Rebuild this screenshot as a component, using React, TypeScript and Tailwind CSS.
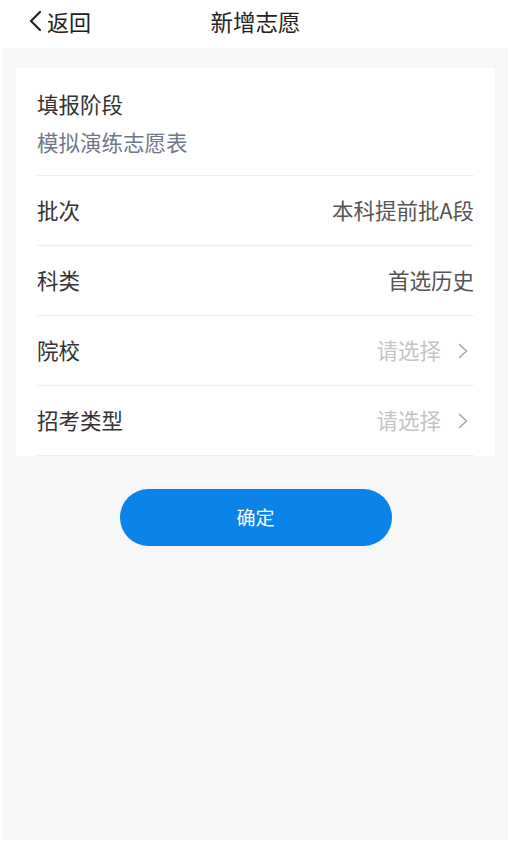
import React from "react";

const font = { fontFamily: '"Noto Sans CJK SC", "Noto Sans", sans-serif' };

function Chevron({ className = "" }: { className?: string }) {
  return (
    <svg width="12" height="20" viewBox="0 0 12 20" className={className} fill="none">
      <path d="M2.5 3.5l7 6.5-7 6.5" stroke="currentColor" strokeWidth="1.6" strokeLinecap="round" strokeLinejoin="round" />
    </svg>
  );
}

function Row({ label, value, placeholder }: { label: string; value?: string; placeholder?: boolean }) {
  return (
    <div className="h-[70px] flex items-center justify-between border-t border-[#eeeeee]">
      <span className="text-[21.5px] text-[#333333]">{label}</span>
      {placeholder ? (
        <span className="flex items-center gap-[16px] text-[21.5px] text-[#c4c4c4]">
          请选择
          <Chevron className="text-[#a8a8a8] mr-[5px]" />
        </span>
      ) : (
        <span className="text-[21.5px] text-[#555555]">{value}</span>
      )}
    </div>
  );
}

export default function App() {
  return (
    <div style={font} className="w-[511px] h-[841px] bg-white flex flex-col">
      <div className="h-[48px] flex items-center relative shrink-0 pb-[6px]">
        <div className="flex items-center pl-[27px] text-[22px] leading-[30px] text-[#222222]">
          <svg width="18" height="26" viewBox="0 0 18 26" fill="none" className="mr-[2px]">
            <path d="M13 4L4 13l9 9" stroke="#222222" strokeWidth="2.2" strokeLinecap="round" strokeLinejoin="round" />
          </svg>
          返回
        </div>
        <div className="absolute left-0 right-0 top-0 h-[42px] flex items-center justify-center text-[22.5px] leading-[30px] text-[#222222] pointer-events-none">
          新增志愿
        </div>
      </div>
      <div className="flex-1 bg-[#f6f7f9] mx-[3px] mb-[1px] pt-[20px]">
        <div className="mx-[13px] bg-white px-[21px]">
          <div className="h-[107px] flex flex-col justify-center gap-[8px] pt-[2px]">
            <span className="text-[21.5px] text-[#333333] leading-[30px]">填报阶段</span>
            <span className="text-[21.5px] text-[#6f7787] leading-[30px]">模拟演练志愿表</span>
          </div>
          <Row label="批次" value="本科提前批A段" />
          <Row label="科类" value="首选历史" />
          <Row label="院校" placeholder />
          <Row label="招考类型" placeholder />
          <div className="border-t border-[#eeeeee]" />
        </div>
        <div className="flex justify-center mt-[33px]">
          <button className="w-[272px] h-[57px] rounded-full bg-[#0a84e9] text-white text-[19px]">
            确定
          </button>
        </div>
      </div>
    </div>
  );
}
